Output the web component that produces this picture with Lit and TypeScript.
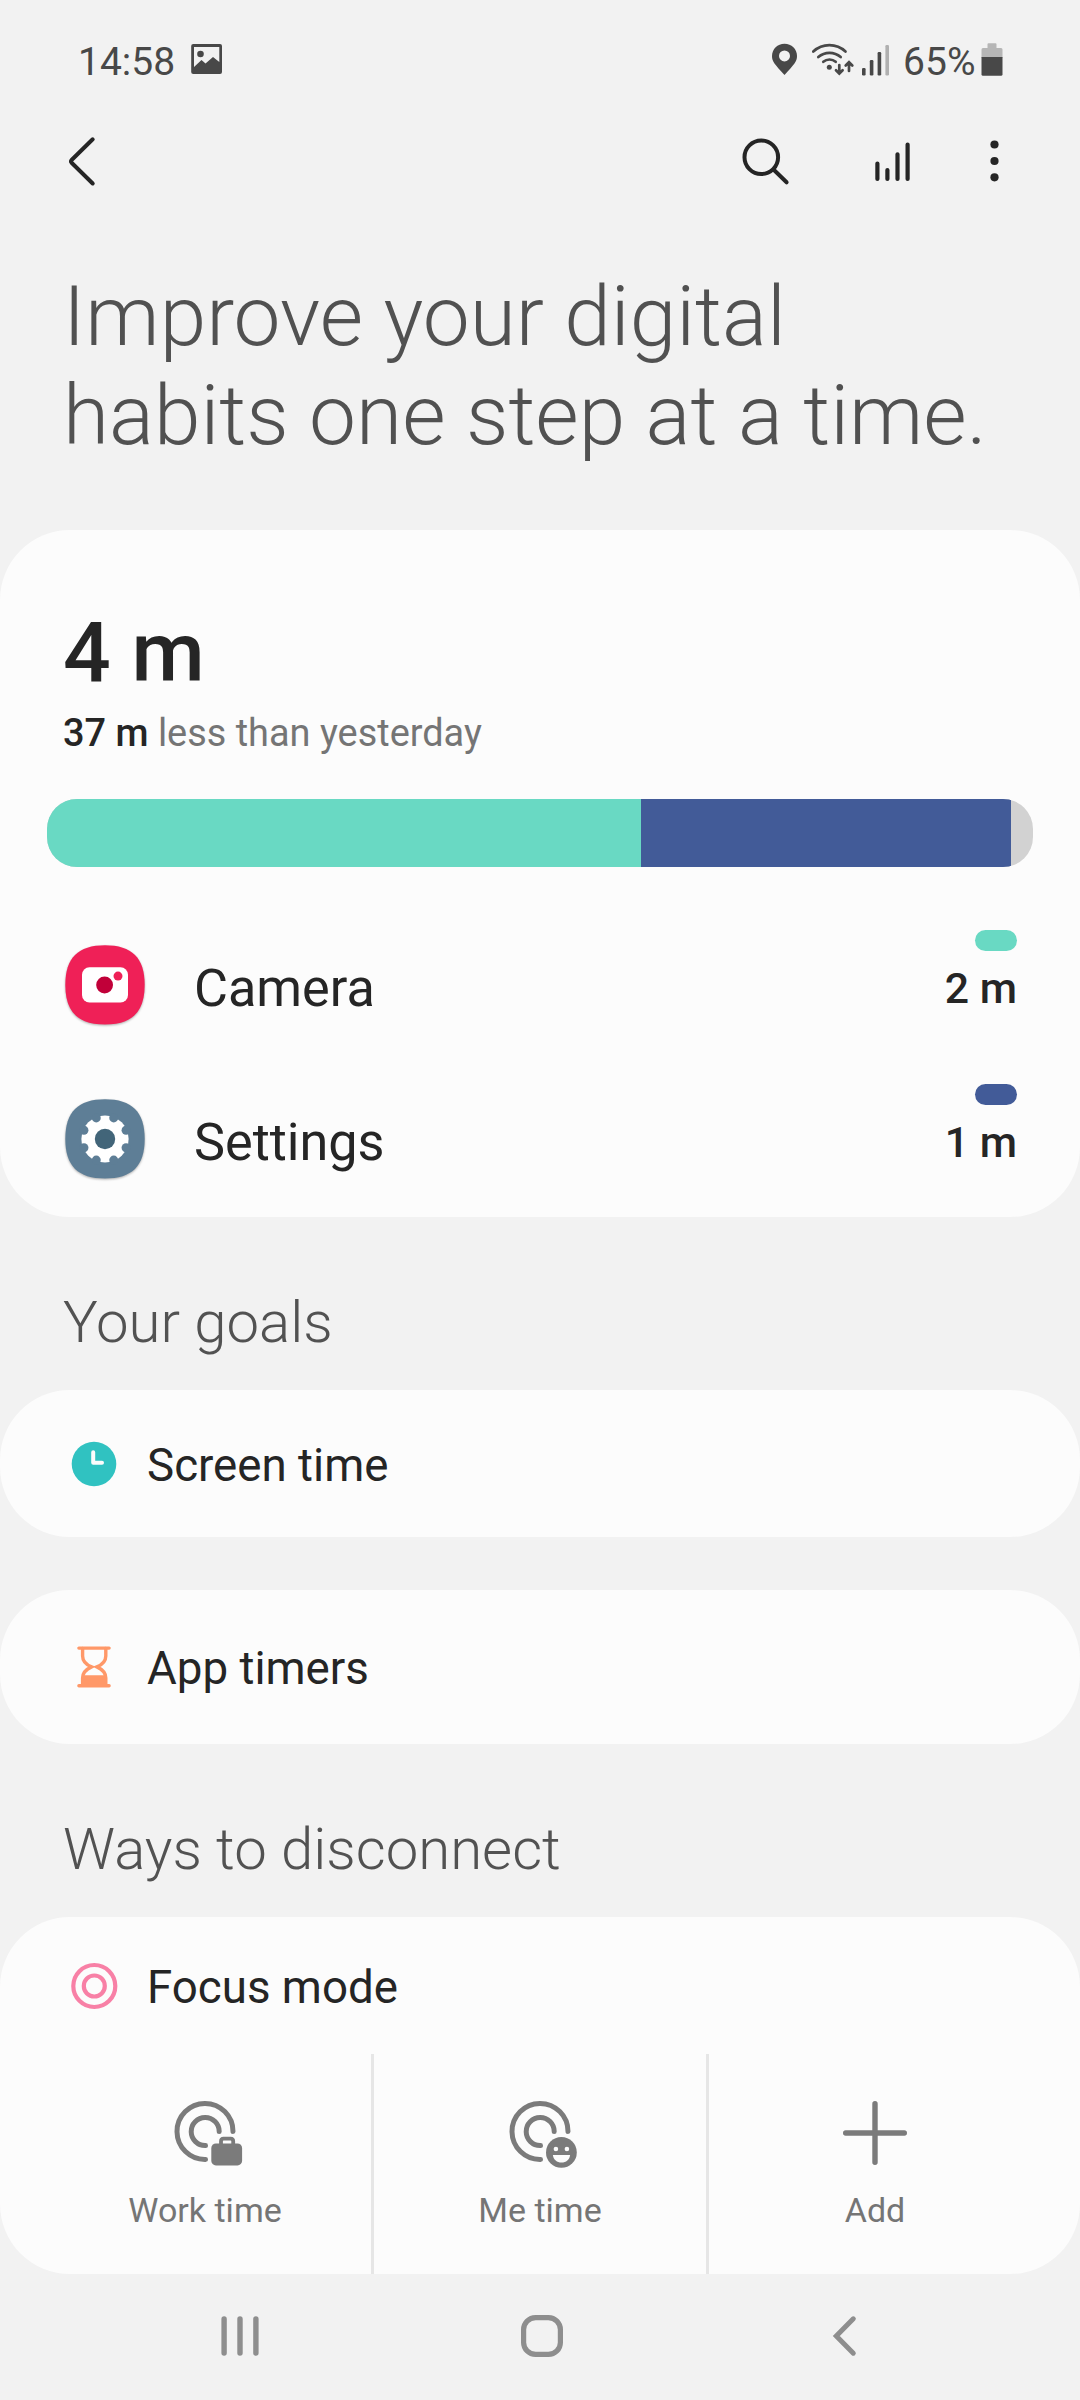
import { LitElement, html, css, svg } from "lit";
import { customElement, property } from "lit/decorators.js";
import { styleMap } from "lit/directives/style-map.js";

const SQUIRCLE =
  "M40 0.3C67 0.3 79.7 13 79.7 40C79.7 67 67 79.5 40 79.5C13 79.5 0.3 67 0.3 40C0.3 13 13 0.3 40 0.3Z";

const notches = Array.from({ length: 8 }, (_, i) => {
  const a = ((22.5 + i * 45) * Math.PI) / 180;
  return { x: 40 + 22.8 * Math.cos(a), y: 40 + 22.8 * Math.sin(a) };
});

const cameraIcon = html`<svg width="80" height="80" viewBox="0 0 80 80">
  <path d=${SQUIRCLE} fill="#ef2057" />
  <rect x="17" y="22.2" width="46" height="35.3" rx="7.5" fill="#fff" />
  <circle cx="39.6" cy="40" r="8.4" fill="#c10039" />
  <circle cx="53" cy="31.1" r="4.5" fill="#ef2057" />
</svg>`;

const settingsIcon = html`<svg width="80" height="80" viewBox="0 0 80 80">
  <path d=${SQUIRCLE} fill="#5e7e96" />
  <circle cx="40" cy="40" r="23.6" fill="#fff" />
  ${notches.map((n) => svg`<circle cx=${n.x} cy=${n.y} r="4.5" fill="#5e7e96" />`)}
  <circle cx="40" cy="40" r="10.2" fill="#426579" />
</svg>`;

const clockIcon = html`<svg width="48" height="48" viewBox="0 0 48 48">
  <circle cx="24" cy="24" r="22.3" fill="#30c2c1" />
  <path d="M23.2 12.3V22.8H32" fill="none" stroke="#fcfcfc" stroke-width="4" stroke-linecap="round" stroke-linejoin="round" />
</svg>`;

const hourglassIcon = html`<svg width="48" height="48" viewBox="0 0 48 48">
  <g fill="none" stroke="#ff9868" stroke-width="3.4" stroke-linecap="round">
    <path d="M8.9 5.1H39.1M8.9 42.7H39.1" />
    <path d="M12.6 5.5V13C12.6 19 17 22 21.5 23.9C17 26 12.6 29 12.6 35V42M35.8 5.5V13C35.8 19 31.4 22 26.9 23.9C31.4 26 35.8 29 35.8 35V42" />
  </g>
  <path d="M12 32.3H36.4L37 43H11.4Z" fill="#ff9868" />
</svg>`;

const targetIcon = html`<svg width="48" height="48" viewBox="0 0 48 48">
  <g fill="none" stroke="#f880a6" stroke-width="4.2">
    <circle cx="24.3" cy="24" r="21" />
    <circle cx="24.3" cy="24" r="10.5" />
  </g>
</svg>`;

const rings = svg`<g fill="none" stroke="#7b7b7b" stroke-width="5" stroke-linecap="round">
  <path d="M68 36.5A28 28 0 1 0 40.5 64.4" />
  <path d="M54.2 36.5A14 14 0 1 0 40.5 50.5" />
</g>`;

const workIcon = html`<svg width="80" height="80" viewBox="0 0 80 80">
  ${rings}
  <rect x="46.3" y="48.4" width="30.8" height="22" rx="4.6" fill="#7b7b7b" />
  <path d="M56 49V46.2Q56 43.6 58.6 43.6H65.6Q68.2 43.6 68.2 46.2V49" fill="none" stroke="#7b7b7b" stroke-width="3.8" />
</svg>`;

const meIcon = html`<svg width="80" height="80" viewBox="0 0 80 80">
  ${rings}
  <circle cx="61.4" cy="57.4" r="15.4" fill="#7b7b7b" />
  <g fill="#fcfcfc">
    <circle cx="55.9" cy="54" r="2.3" />
    <circle cx="66.9" cy="54" r="2.3" />
    <path d="M52.9 60H70.1C69.6 64.6 66 67.6 61.5 67.6S53.4 64.6 52.9 60Z" />
  </g>
</svg>`;

const plusIcon = html`<svg width="80" height="80" viewBox="0 0 80 80">
  <path d="M40 8.7V67.3M10.7 38H69.3" fill="none" stroke="#7b7b7b" stroke-width="5.4" stroke-linecap="round" />
</svg>`;

@customElement("usage-row")
class UsageRow extends LitElement {
  @property({ attribute: false }) icon: unknown;
  @property() name = "";
  @property() time = "";
  @property() color = "";

  static styles = css`
    :host { display: flex; align-items: center; height: 154px; padding: 0 63px 0 65px; }
    .icon { height: 80px; filter: drop-shadow(0 1px 1px rgba(0, 0, 0, 0.3)); }
    svg { display: block; }
    .name { flex: 1; margin-left: 49px; padding-top: 7px; font-size: 52.2px; line-height: 60px; color: #252525; }
    .usage { display: flex; flex-direction: column; align-items: flex-end; gap: 12px; padding-bottom: 27px; }
    .pill { width: 42px; height: 21px; border-radius: 10.5px; }
    .time { font-size: 42.8px; font-weight: 500; line-height: 50px; color: #252525; }
  `;

  render() {
    return html`
      <div class="icon">${this.icon}</div>
      <div class="name">${this.name}</div>
      <div class="usage">
        <div class="pill" style=${styleMap({ background: this.color })}></div>
        <div class="time">${this.time}</div>
      </div>
    `;
  }
}

@customElement("goal-row")
class GoalRow extends LitElement {
  @property({ attribute: false }) icon: unknown;
  @property() label = "";

  static styles = css`
    :host { display: flex; align-items: center; padding-left: 70px; }
    svg { display: block; }
    .label { margin-left: 29px; padding-top: 4px; font-size: 45.7px; line-height: 54px; color: #252525; }
  `;

  render() {
    return html`${this.icon}<div class="label">${this.label}</div>`;
  }
}

@customElement("app-root")
class AppRoot extends LitElement {
  static styles = css`
    :host {
      display: flex;
      flex-direction: column;
      height: 2400px;
      background: #f2f2f2;
      font-family: Roboto, "Liberation Sans", sans-serif;
      color: #252525;
    }
    svg { display: block; flex: none; }
    .status { display: flex; height: 110px; box-sizing: border-box; padding: 40px 77.5px 0 78px; color: #484848; font-size: 39px; line-height: 44px; }
    .clock { flex: 1; display: flex; gap: 15px; }
    .system { display: flex; }
    .battery-text { margin-left: 11px; margin-right: 5px; }
    .toolbar { display: flex; align-items: center; height: 102px; padding: 0 72px 0 66px; }
    .spacer { flex: 1; }
    .search { margin-right: 82px; }
    .chart { margin-right: 70px; }
    .headline { margin: 55px 0 65px 63px; font-size: 83.8px; font-weight: 300; line-height: 99px; color: #515151; white-space: nowrap; }
    .card { background: #fcfcfc; border-radius: 70px; }
    .summary { height: 687px; box-sizing: border-box; padding-top: 73px; }
    .total { padding-left: 63px; font-size: 84px; font-weight: 500; line-height: 100px; }
    .compare { padding: 8px 0 0 63px; font-size: 37.9px; line-height: 44px; color: #757575; }
    .compare b { font-weight: 500; color: #252525; }
    .bar { display: flex; margin: 44px 47px 41px; height: 68px; border-radius: 30px; overflow: hidden; background: #d2d2d2; }
    .section { margin: 71px 0 34px 63px; font-size: 58.1px; font-weight: 300; line-height: 68px; color: #525252; }
    .screen-time { height: 147px; margin-bottom: 53px; display: grid; }
    .app-timers { height: 154px; display: grid; }
    .focus { height: 357px; display: flex; flex-direction: column; }
    .focus goal-row { height: 137px; }
    .modes { flex: 1; display: grid; grid-template-columns: 332px 335px 335px; padding: 0 39px; }
    .mode { display: flex; flex-direction: column; align-items: center; gap: 15px; padding-top: 41px; font-size: 34px; line-height: 40px; color: #757575; }
    .mode + .mode { border-left: 3px solid #e6e6e6; }
    .nav { flex: 1; display: flex; align-items: flex-start; padding: 38px 0 0 216px; }
    .home { margin: 0 254px 0 253px; }
  `;

  private segments = [
    { color: "#69d9c3", width: 594 },
    { color: "#425b98", width: 370 },
  ];

  private modes = [
    { icon: workIcon, label: "Work time" },
    { icon: meIcon, label: "Me time" },
    { icon: plusIcon, label: "Add" },
  ];

  render() {
    return html`
      <div class="status">
        <div class="clock">
          <span>14:58</span>
          <svg width="34" height="36" viewBox="190 40 34 36">
            <path fill-rule="evenodd" fill="#484848" d="M193.300 44H220Q222 44 222 46V72Q222 74 220 74H193.300Q191.200 74 191.200 72V46Q191.200 44 193.300 44ZM194 47V67L201.500 60L205.500 63.600L213 57L219.300 62V47Z" />
            <circle cx="200.500" cy="54" r="3.300" fill="#484848" />
          </svg>
        </div>
        <div class="system">
          <svg width="122" height="40" viewBox="770 40 122 40">
            <path fill-rule="evenodd" fill="#484848" d="M784.500 43.700C791.500 43.700 797 49 797 56C797 61.500 794.500 64 784.500 75C774.500 64 772 61.500 772 56C772 49 777.500 43.700 784.500 43.700ZM784.500 50.400A5.500 5.500 0 1 0 784.500 61.400A5.500 5.500 0 1 0 784.500 50.400Z" />
            <g fill="none" stroke="#484848" stroke-width="2.700" stroke-linecap="round">
              <path d="M813.300 51.600A23.500 23.500 0 0 1 845.500 51.600" />
              <path d="M818.300 57A17 17 0 0 1 840.700 57" />
              <path d="M823.300 61.800A9.500 9.500 0 0 1 835.700 61.800" />
              <path d="M839.300 65V73M836 70.300L839.300 73.600L842.600 70.300" />
              <path d="M849 71V63M845.700 65.500L849 62.200L852.300 65.500" />
            </g>
            <circle cx="829.300" cy="67.300" r="2.500" fill="#484848" />
            <g fill="#484848">
              <rect x="862" y="68" width="3.600" height="7.500" rx="1.200" />
              <rect x="869.800" y="60" width="3.600" height="15.500" rx="1.200" />
              <rect x="877.600" y="52" width="3.600" height="23.500" rx="1.200" />
            </g>
            <rect x="885.400" y="45" width="3.600" height="30.500" rx="1.200" fill="#b0b0b0" />
          </svg>
          <span class="battery-text">65%</span>
          <svg width="22" height="40" viewBox="980.500 40 22 40">
            <path d="M988 43.200H995Q996 43.200 996 44.200V48H1000.500Q1002 48 1002 49.500V58H981V49.500Q981 48 982.500 48H987V44.200Q987 43.200 988 43.200Z" fill="#b6b6b6" />
            <path d="M981 57H1002V74.300Q1002 75.800 1000.500 75.800H982.500Q981 75.800 981 74.300Z" fill="#484848" />
          </svg>
        </div>
      </div>

      <div class="toolbar">
        <svg width="32" height="54" viewBox="66 134 32 54">
          <path d="M92.700 139.300L71.600 160Q70.400 161.400 71.600 162.800L92.700 183.500" fill="none" stroke="#252525" stroke-width="4" stroke-linecap="round" stroke-linejoin="round" />
        </svg>
        <div class="spacer"></div>
        <svg class="search" width="50" height="50" viewBox="740 136 50 50">
          <g fill="none" stroke="#252525" stroke-width="4" stroke-linecap="round">
            <circle cx="761.300" cy="157.300" r="16.800" />
            <path d="M774 170L786.600 182.300" />
          </g>
        </svg>
        <svg class="chart" width="40" height="44" viewBox="872 139 40 44">
          <path d="M877.400 163.500V179M887.400 170V179M897.500 154.300V179M907.600 144.500V179" fill="none" stroke="#252525" stroke-width="4.200" stroke-linecap="round" />
        </svg>
        <svg width="26" height="44" viewBox="982 139.500 26 44">
          <g fill="#252525">
            <circle cx="994.500" cy="145" r="4.100" />
            <circle cx="994.500" cy="161.500" r="4.100" />
            <circle cx="994.500" cy="177.800" r="4.100" />
          </g>
        </svg>
      </div>

      <div class="headline">Improve your digital<br />habits one step at a time.</div>

      <div class="card summary">
        <div class="total">4 m</div>
        <div class="compare"><b>37 m</b> less than yesterday</div>
        <div class="bar">
          ${this.segments.map(
            (s) => html`<div style=${styleMap({ width: s.width + "px", background: s.color })}></div>`
          )}
        </div>
        <usage-row .icon=${cameraIcon} name="Camera" time="2 m" color="#69d9c3"></usage-row>
        <usage-row .icon=${settingsIcon} name="Settings" time="1 m" color="#425b98"></usage-row>
      </div>

      <div class="section">Your goals</div>
      <div class="card screen-time"><goal-row .icon=${clockIcon} label="Screen time"></goal-row></div>
      <div class="card app-timers"><goal-row .icon=${hourglassIcon} label="App timers"></goal-row></div>

      <div class="section">Ways to disconnect</div>
      <div class="card focus">
        <goal-row .icon=${targetIcon} label="Focus mode"></goal-row>
        <div class="modes">
          ${this.modes.map((m) => html`<div class="mode">${m.icon}<span>${m.label}</span></div>`)}
        </div>
      </div>

      <div class="nav">
        <svg width="48" height="48" viewBox="216 2312 48 48">
          <path d="M224.100 2319V2353M240 2319V2353M255.900 2319V2353" fill="none" stroke="#8e8e8e" stroke-width="5.400" stroke-linecap="round" />
        </svg>
        <svg class="home" width="50" height="48" viewBox="517 2312 50 48">
          <rect x="523.600" y="2317.600" width="36.800" height="36.800" rx="12" fill="none" stroke="#8e8e8e" stroke-width="5.200" />
        </svg>
        <svg width="40" height="48" viewBox="821 2312 40 48">
          <path d="M853.300 2318.800L836.300 2336L853.300 2353.200" fill="none" stroke="#8e8e8e" stroke-width="5" stroke-linecap="round" />
        </svg>
      </div>
    `;
  }
}
